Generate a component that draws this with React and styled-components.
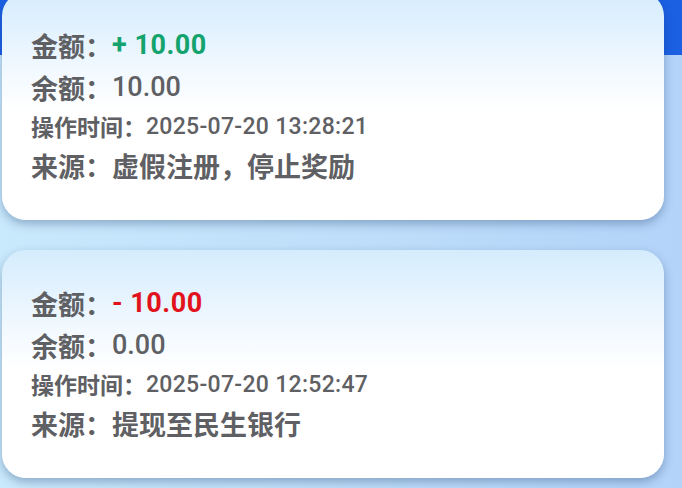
import styled, { createGlobalStyle } from "styled-components";

const GlobalStyle = createGlobalStyle`
  * { margin: 0; padding: 0; box-sizing: border-box; }
  body {
    font-family: Roboto, "Noto Sans CJK SC", sans-serif;
    background: linear-gradient(90deg, #c9e9fc 0%, #b3d3f8 100%);
    min-height: 100vh;
    overflow: hidden;
  }
`;

const Page = styled.div`
  min-height: 100vh;
`;

const Header = styled.div`
  height: 55px;
  background: #1b5fe3;
`;

const List = styled.div`
  margin-top: -63px;
  padding-left: 2px;
  width: 664px;
  display: flex;
  flex-direction: column;
  gap: 30px;
`;

const Card = styled.div`
  height: 228px;
  padding: 33px 29px;
  border-radius: 24px;
  background: linear-gradient(180deg, #d5ecfd 0%, #f2f9ff 35%, #ffffff 52%, #ffffff 100%);
  box-shadow: 0 4px 10px rgba(30, 60, 110, 0.35);
`;

const Row = styled.div`
  display: flex;
  align-items: center;
  height: ${p => p.$h}px;
  font-size: ${p => p.$size || 27}px;
  color: #5f6064;
  white-space: nowrap;
`;

const Label = styled.span`
  font-family: "Noto Sans CJK SC", sans-serif;
  font-weight: 700;
`;

const Value = styled.span`
  font-weight: ${p => p.$weight || 500};
  color: ${p => p.$color || "#5f6064"};
  letter-spacing: ${p => p.$spacing || 0}px;
`;

const CnValue = styled.span`
  font-family: "Noto Sans CJK SC", sans-serif;
  font-weight: 700;
`;

const records = [
  { sign: "+", amount: "10.00", balance: "10.00", time: "2025-07-20 13:28:21", source: "虚假注册，停止奖励" },
  { sign: "-", amount: "10.00", balance: "0.00", time: "2025-07-20 12:52:47", source: "提现至民生银行" },
];

function App() {
  return (
    <Page>
      <GlobalStyle />
      <Header />
      <List>
        {records.map(r => (
          <Card key={r.time}>
            <Row $h={40}>
              <Label>金额：</Label>
              <Value $weight={700} $spacing={0.5} $color={r.sign === "+" ? "#13a36c" : "#e2121c"}>
                {r.sign} {r.amount}
              </Value>
            </Row>
            <Row $h={44}>
              <Label>余额：</Label>
              <Value>{r.balance}</Value>
            </Row>
            <Row $h={34} $size={23}>
              <Label>操作时间：</Label>
              <Value $spacing={0.3}>{r.time}</Value>
            </Row>
            <Row $h={44}>
              <Label>来源：</Label>
              <CnValue>{r.source}</CnValue>
            </Row>
          </Card>
        ))}
      </List>
    </Page>
  );
}

export default App;
